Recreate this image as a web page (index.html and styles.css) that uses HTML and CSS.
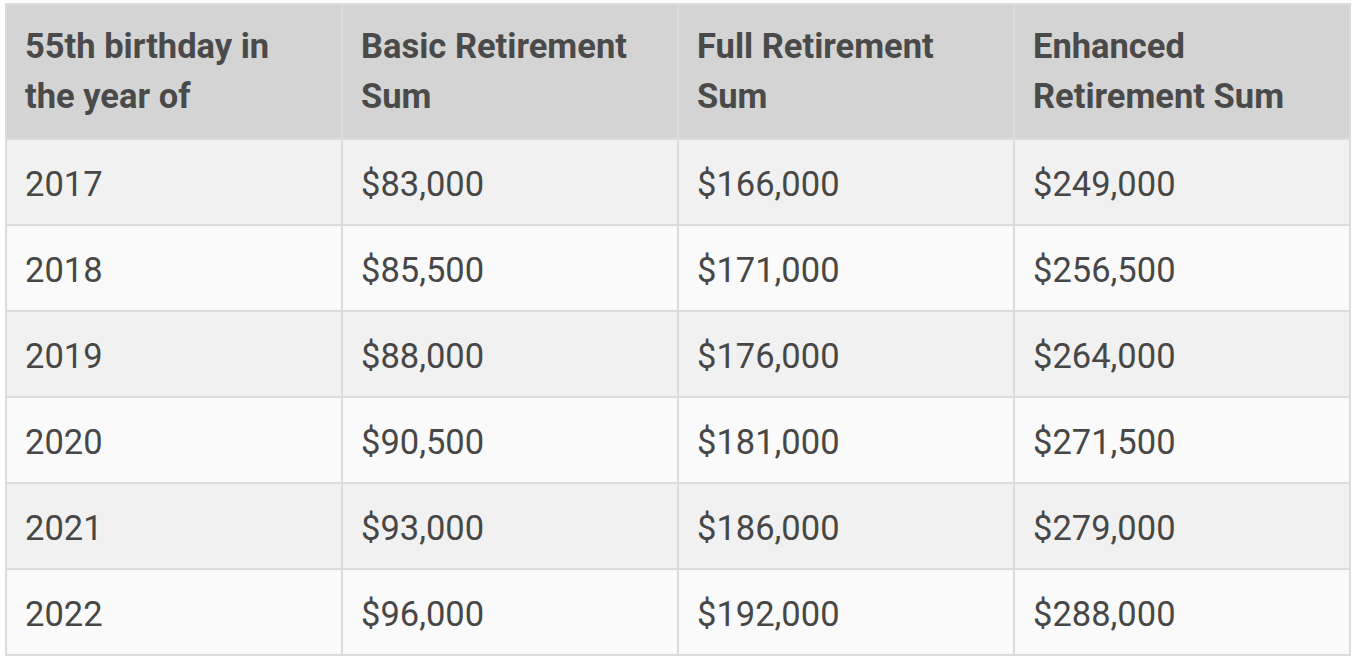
FILE: index.html
```html
<!DOCTYPE html>
<html>
<head>
<meta charset="utf-8">
<link rel="stylesheet" href="styles.css">
</head>
<body>
<table class="sums">
  <thead>
    <tr>
      <th>55th birthday in the year of</th>
      <th>Basic Retirement Sum</th>
      <th>Full Retirement Sum</th>
      <th>Enhanced Retirement Sum</th>
    </tr>
  </thead>
  <tbody>
    <tr><td>2017</td><td>$83,000</td><td>$166,000</td><td>$249,000</td></tr>
    <tr><td>2018</td><td>$85,500</td><td>$171,000</td><td>$256,500</td></tr>
    <tr><td>2019</td><td>$88,000</td><td>$176,000</td><td>$264,000</td></tr>
    <tr><td>2020</td><td>$90,500</td><td>$181,000</td><td>$271,500</td></tr>
    <tr><td>2021</td><td>$93,000</td><td>$186,000</td><td>$279,000</td></tr>
    <tr><td>2022</td><td>$96,000</td><td>$192,000</td><td>$288,000</td></tr>
  </tbody>
</table>
</body>
</html>
```

FILE: styles.css
```css
html, body {
  margin: 0;
  padding: 0;
  background: #ffffff;
}
body {
  padding: 3px 5px 0 5px;
  font-family: Roboto, "Liberation Sans", sans-serif;
}
.sums {
  border-collapse: collapse;
  table-layout: fixed;
  width: 1346px;
  color: #474747;
}
.sums th, .sums td {
  border: 2px solid #dcdcdc;
  text-align: left;
  padding: 0 18px 0 18px;
  vertical-align: middle;
}
.sums th {
  background: #d4d4d4;
  height: 129px;
  font-size: 34.5px;
  font-weight: 700;
  line-height: 50px;
  color: #4a4a4a;
  padding-top: 1px;
  padding-bottom: 3px;
}
.sums td {
  height: 81px;
  font-size: 34.5px;
  font-weight: 400;
  line-height: 40px;
  padding-top: 3px;
}
.sums tbody tr:nth-child(odd) td {
  background: #f1f1f1;
}
.sums tbody tr:nth-child(even) td {
  background: #fafafa;
}
```
